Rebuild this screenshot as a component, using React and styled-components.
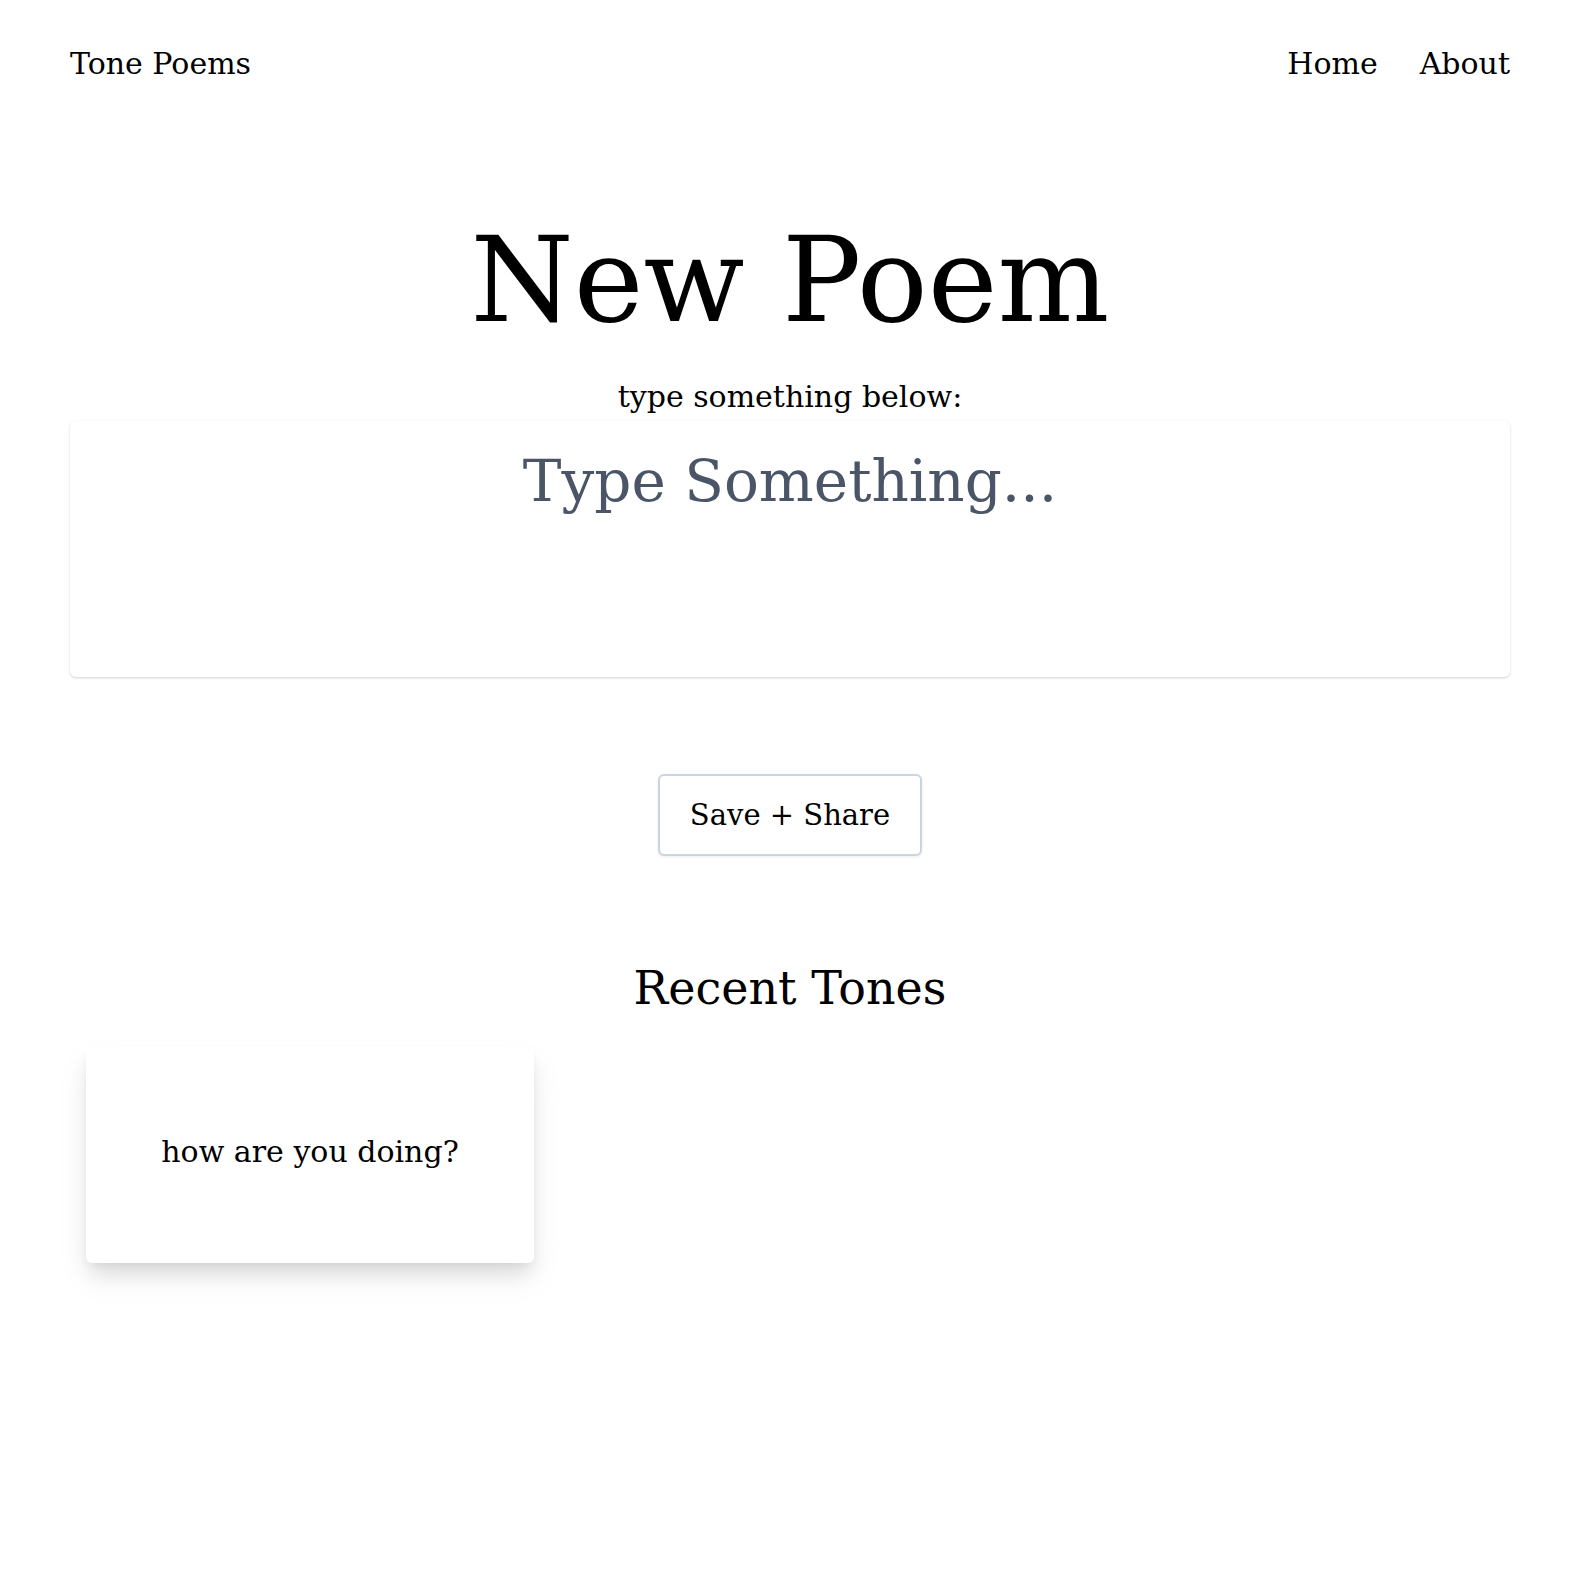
import React, { useState } from "react";
import styled, { createGlobalStyle } from "styled-components";

const GlobalStyle = createGlobalStyle`
  * { box-sizing: border-box; }
  body {
    margin: 0;
    background: #ffffff;
    color: #000000;
    font-family: "DejaVu Serif", "Liberation Serif", serif;
  }
`;

const Page = styled.div`
  padding: 0 80px 0 70px;
  min-height: 1586px;
`;

const Nav = styled.nav`
  display: flex;
  justify-content: space-between;
  align-items: center;
  height: 126px;
`;

const Brand = styled.a`
  font-size: 30px;
  color: #000;
  text-decoration: none;
`;

const NavLinks = styled.div`
  display: flex;
  gap: 42px;
`;

const NavLink = styled.a`
  font-size: 30px;
  color: #000;
  text-decoration: none;
`;

const Title = styled.h1`
  margin: 90px 0 0;
  text-align: center;
  font-size: 118px;
  font-weight: normal;
  line-height: 1.1;
`;

const Hint = styled.p`
  margin: 36px 0 0;
  text-align: center;
  font-size: 30px;
  line-height: 1;
`;

const PoemInput = styled.textarea`
  display: block;
  width: 100%;
  height: 256px;
  margin-top: 9px;
  padding: 26px 16px;
  border: none;
  border-radius: 6px;
  box-shadow: 0 1px 3px rgba(0, 0, 0, 0.12), 0 1px 2px rgba(0, 0, 0, 0.06);
  font-family: inherit;
  font-size: 58px;
  text-align: center;
  resize: none;
  outline: none;

  &::placeholder {
    color: #4a5568;
  }
`;

const Actions = styled.div`
  display: flex;
  justify-content: center;
  margin-top: 97px;
`;

const ShareButton = styled.button`
  width: 264px;
  height: 82px;
  background: #fff;
  border: 2px solid #cbd5e0;
  border-radius: 6px;
  box-shadow: 0 1px 3px rgba(0, 0, 0, 0.08);
  font-family: inherit;
  font-size: 29px;
  color: #000;
  cursor: pointer;
`;

const SectionTitle = styled.h2`
  margin: 105px 0 0;
  text-align: center;
  font-size: 46px;
  font-weight: normal;
  line-height: 1.2;
`;

const ToneGrid = styled.div`
  display: grid;
  grid-template-columns: repeat(3, 448px);
  gap: 32px;
  margin-top: 31px;
  padding-left: 16px;
`;

const ToneCard = styled.div`
  height: 216px;
  display: flex;
  align-items: center;
  justify-content: center;
  padding-bottom: 6px;
  border-radius: 6px;
  background: #fff;
  box-shadow: 0 14px 20px -4px rgba(0, 0, 0, 0.1),
    0 4px 8px -2px rgba(0, 0, 0, 0.05), 0 16px 34px rgba(0, 0, 0, 0.06);
  font-size: 30px;
`;

const tones = [{ id: 1, text: "how are you doing?" }];

const App = () => {
  const [poem, setPoem] = useState("");

  return (
    <>
      <GlobalStyle />
      <Page>
        <Nav>
          <Brand href="#">Tone Poems</Brand>
          <NavLinks>
            <NavLink href="#">Home</NavLink>
            <NavLink href="#">About</NavLink>
          </NavLinks>
        </Nav>

        <Title>New Poem</Title>
        <Hint>type something below:</Hint>
        <PoemInput
          placeholder="Type Something..."
          value={poem}
          onChange={(e) => setPoem(e.target.value)}
        />

        <Actions>
          <ShareButton>Save + Share</ShareButton>
        </Actions>

        <SectionTitle>Recent Tones</SectionTitle>
        <ToneGrid>
          {tones.map((tone) => (
            <ToneCard key={tone.id}>{tone.text}</ToneCard>
          ))}
        </ToneGrid>
      </Page>
    </>
  );
};

export default App;
